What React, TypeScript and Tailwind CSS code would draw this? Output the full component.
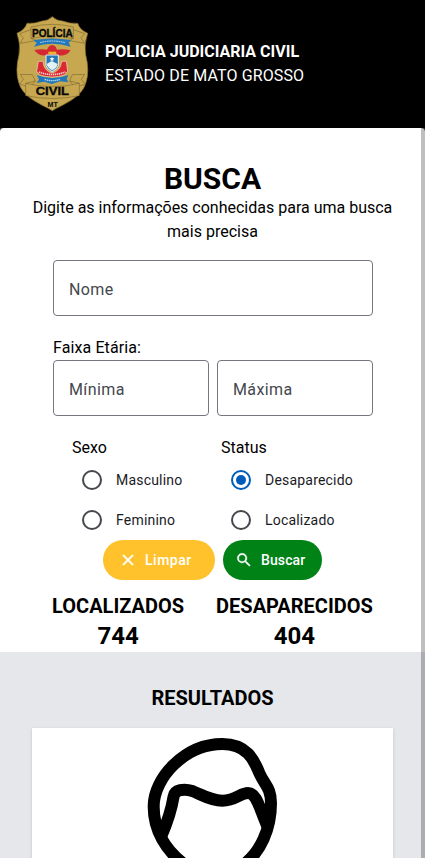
import React from 'react';

function Badge() {
  return (
    <svg className="block h-24 w-[73px] shrink-0" viewBox="0 0 219 288" fontFamily="Liberation Sans, sans-serif" fontWeight="bold" textAnchor="middle">
      <path d="M109 2 Q124 15 139 15 Q162 24 185 22 Q191 42 215 52 Q203 84 209 116 Q221 164 210 199 C197 248 137 266 109 284 C81 266 21 248 8 199 Q-3 164 9 116 Q15 84 3 52 Q27 42 33 22 Q56 24 79 15 Q94 15 109 2Z" fill="#c7a750" stroke="#92783a" strokeWidth="2" />
      <path d="M45 33 Q109 17 172 33 V68 Q109 52 45 68Z M45 41 L11 53 L22 65 L13 82 L58 74 L45 66 M172 41 L206 53 L195 65 L206 82 L161 74 L172 66" fill="#c7a750" stroke="#6b5929" strokeWidth="1.5" />
      <text x="109" y="64" fontSize="31" textLength="122" lengthAdjust="spacingAndGlyphs" fill="#080808" stroke="#080808" strokeWidth="1">POLÍCIA</text>
      <path d="M52 72 Q108 63 166 72 L158 80 L164 92 Q109 75 54 92 L62 81Z" fill="#2378bb" />
      <path d="M72 80 Q109 70 147 80" fill="none" stroke="#b8dced" strokeWidth="3" strokeDasharray="5 2" />
      <path d="M55 102 Q78 98 93 101 L98 92 Q108 82 119 92 L123 101 Q143 98 164 103 Q151 122 126 118 L94 118 Q68 122 55 102Z" fill="#d52831" />
      <path d="M97 107 H121 V115 H97Z" fill="#e9b828" />
      <path d="M67 136 L81 136 Q83 165 108 171 Q134 165 137 136 L151 136 L155 166 L145 177 Q109 189 71 177 L62 166Z" fill="#db2831" stroke="#e8e1c7" strokeWidth="2" />
      <path d="M90 117 H127 V148 Q125 160 108 167 Q92 159 90 148Z" fill="#2878b7" stroke="#e9eff0" strokeWidth="3" />
      <path d="M92 144 L107 135 L125 144 Q122 158 108 163 Q95 156 92 144Z" fill="#e4f1f3" />
      <path d="M108 122 L110 127 L115 127 L111 131 L113 136 L108 133 L103 136 L105 131 L101 127 L106 127Z" fill="#fff" />
      <path d="M69 168 Q109 183 148 168" fill="none" stroke="#f2d5cd" strokeWidth="5" strokeDasharray="4 2" />
      <path d="M62 177 Q109 195 157 177 L152 188 L157 199 L132 196 L108 204 L85 197 L62 201 L69 190Z" fill="#2378bb" />
      <path d="M86 190 Q109 198 132 190" fill="none" stroke="#b8dced" strokeWidth="4" strokeDasharray="4 2" />
      <path d="M29 202 Q109 222 190 202 V239 Q109 256 29 239Z M29 202 L58 195 L49 176 L13 175 L22 190 L11 204 L29 210 M190 202 L161 195 L169 176 L206 175 L196 190 L208 204 L190 210 M58 195 L49 206 M161 195 L170 206" fill="#c7a750" stroke="#6b5929" strokeWidth="1.5" />
      <text x="109" y="238" fontSize="33" textLength="100" lengthAdjust="spacingAndGlyphs" fill="#080808" stroke="#080808" strokeWidth="1">CIVIL</text>
      <text x="110" y="272" fontSize="19" textLength="31" lengthAdjust="spacingAndGlyphs" fill="#080808">MT</text>
    </svg>
  );
}

function Field({ label }: { label: string }) {
  return <div className="flex h-14 flex-1 items-center rounded border border-[#74777f] pl-[15px] pt-1 text-base tracking-[0.4px] text-[#44474e]">{label}</div>;
}

function Option({ label, checked = false }: { label: string; checked?: boolean }) {
  return (
    <div className="flex h-10 items-center pl-[10px] text-sm tracking-[0.2px] text-[#1a1b1f]">
      <span className={checked ? 'flex size-5 items-center justify-center rounded-full border-2 border-[#005cbb]' : 'flex size-5 rounded-full border-2 border-[#44474e]'}>
        {checked && <span className="size-[10px] rounded-full bg-[#005cbb]" />}
      </span>
      <span className="ml-[14px]">{label}</span>
    </div>
  );
}

function Portrait() {
  return (
    <svg className="block h-[130px] w-[155px]" viewBox="0 0 465 390" fill="none" stroke="#000" strokeWidth="36">
      <path d="M144 406 C95 368 56 310 56 235 C56 150 150 48 262 48 C335 48 357 95 373 135 C388 170 408 178 408 225 C408 305 375 371 331 406" />
      <path d="M79 324 C99 279 109 247 116 205 C119 185 147 181 172 189 C202 201 226 218 262 218 C302 218 316 195 339 195 C365 195 373 239 396 292" />
    </svg>
  );
}

export default function App() {
  return (
    <div className="relative h-[858px] overflow-hidden bg-white font-[Roboto,sans-serif] text-base leading-6 text-black">
      <header className="flex h-32 items-start bg-black pl-4 pt-4 text-white">
        <Badge />
        <div className="ml-4 mt-6">
          <p className="font-bold">POLICIA JUDICIARIA CIVIL</p>
          <p className="tracking-[0.12px]">ESTADO DE MATO GROSSO</p>
        </div>
      </header>
      <div className="bg-[linear-gradient(#333_8px,#fff_8px)]">
        <section className="h-[464px] rounded bg-white px-8 pt-[33px]">
          <div className="text-center">
            <h1 className="text-[30px] font-bold leading-[35px]">BUSCA</h1>
            <p>Digite as informações conhecidas para uma busca mais precisa</p>
          </div>
          <form className="ml-[21px] mt-4 w-80">
            <div className="flex"><Field label="Nome" /></div>
            <p className="mt-5 tracking-[0.1px]">Faixa Etária:</p>
            <div className="flex gap-2"><Field label="Mínima" /><Field label="Máxima" /></div>
            <div className="mt-5 flex pl-[19px]">
              <div className="w-[149px]"><p>Sexo</p><Option label="Masculino" /><Option label="Feminino" /></div>
              <div><p>Status</p><Option label="Desaparecido" checked /><Option label="Localizado" /></div>
            </div>
            <div className="flex gap-2 pl-[50px] text-sm font-medium tracking-[0.1px] text-white">
              <button type="button" className="flex h-10 w-28 items-center rounded-full bg-[#ffc22d] pl-4">
                <svg className="size-[18px]" viewBox="0 0 24 24" fill="currentColor" stroke="currentColor" strokeWidth="0.8"><path d="M19 6.41 17.59 5 12 10.59 6.41 5 5 6.41 10.59 12 5 17.59 6.41 19 12 13.41 17.59 19 19 17.59 13.41 12z" /></svg>
                <span className="ml-2 tracking-[0.5px]">Limpar</span>
              </button>
              <button type="button" className="flex h-10 w-[99px] items-center rounded-full bg-[#008217] pl-3">
                <svg className="size-[18px]" viewBox="0 0 24 24" fill="currentColor" stroke="currentColor" strokeWidth="0.4"><path d="M15.5 14h-.79l-.28-.27A6.47 6.47 0 0 0 16 9.5 6.5 6.5 0 1 0 9.5 16c1.61 0 3.09-.59 4.23-1.57l.27.28v.79l5 4.99L20.49 19zm-6 0C7.01 14 5 11.99 5 9.5S7.01 5 9.5 5 14 7.01 14 9.5 11.99 14 9.5 14" /></svg>
                <span className="ml-2">Buscar</span>
              </button>
            </div>
          </form>
        </section>
      </div>
      <section className="flex h-[60px] justify-center gap-8 text-center font-bold">
        <div><h2 className="text-xl leading-7">LOCALIZADOS</h2><p className="text-2xl">744</p></div>
        <div><h2 className="text-xl leading-7">DESAPARECIDOS</h2><p className="text-2xl">404</p></div>
      </section>
      <main className="h-[206px] bg-[#e5e7eb] px-8 pt-8 text-center">
        <h2 className="text-xl font-bold leading-7">RESULTADOS</h2>
        <div className="mt-4 h-[140px] bg-white pl-[103px] shadow-[0_1px_3px_rgba(0,0,0,0.15)]"><Portrait /></div>
      </main>
      <div className="absolute right-0 top-32 h-[730px] w-1 bg-black/25" />
    </div>
  );
}
